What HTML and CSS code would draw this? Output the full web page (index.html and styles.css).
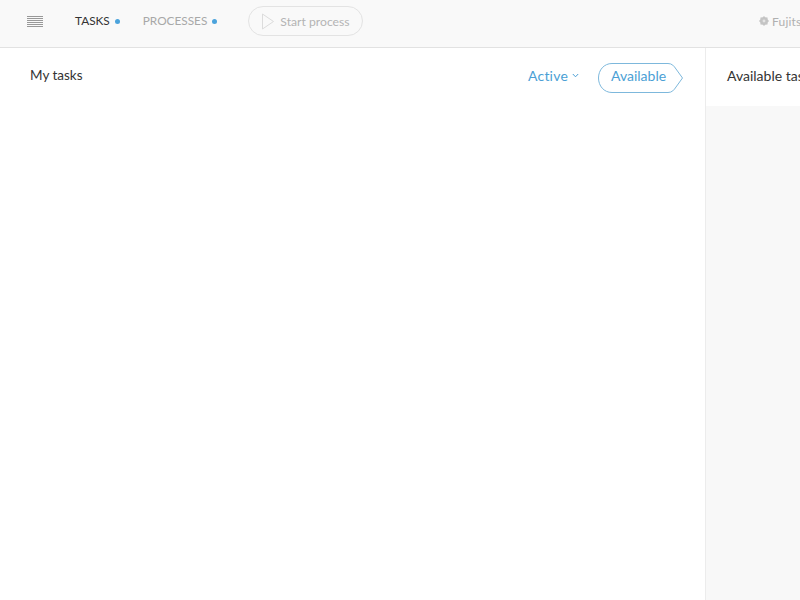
FILE: index.html
```html
<!DOCTYPE html>
<html lang="en">
<head>
    <meta charset="UTF-8">
    <meta name="viewport" content="width=device-width, initial-scale=1.0">
    <title>Tasks</title>
    <link rel="stylesheet" href="styles.css">
</head>
<body>

    <!-- Top bar -->
    <header class="topbar">
        <div class="menu-icon">
            <span></span><span></span><span></span><span></span><span></span><span></span>
        </div>
        <nav class="tabs">
            <div class="tab tab-active">TASKS<i class="dot"></i></div>
            <div class="tab">PROCESSES<i class="dot"></i></div>
        </nav>
        <div class="start-btn">
            <svg class="play-icon" width="14" height="17" viewBox="0 0 14 17">
                <path d="M1.5 1 L12.5 8.5 L1.5 16 Z" fill="none" stroke="#dcdcdc" stroke-width="1"/>
            </svg>
            Start process
        </div>
        <div class="tenant">
            <svg class="gear-icon" width="10" height="10" viewBox="0 0 10 10">
                <path d="M5 0 L6.2 1.3 L8.5 1.5 L8.7 3.6 L10 5 L8.7 6.4 L8.5 8.5 L6.2 8.7 L5 10 L3.8 8.7 L1.5 8.5 L1.3 6.4 L0 5 L1.3 3.6 L1.5 1.5 L3.8 1.3 Z" fill="#c4c4c4"/>
                <circle cx="5" cy="5" r="1.4" fill="#e4e4e4"/>
            </svg>
            Fujitsu
        </div>
    </header>

    <main class="panels">
        <!-- My tasks -->
        <section class="panel-main">
            <div class="panel-head">
                <h2>My tasks</h2>
                <div class="filters">
                    <div class="filter-active">
                        Active
                        <svg width="7" height="5" viewBox="0 0 7 5">
                            <path d="M0.8 1 L3.5 3.8 L6.2 1" fill="none" stroke="#4b9fd5" stroke-width="1"/>
                        </svg>
                    </div>
                    <div class="filter-available">
                        <svg class="tag-shape" width="86" height="30" viewBox="0 0 86 30">
                            <path d="M14 0.5 H70 C74 0.5 76 3 78 6 L84.5 15 L78 24 C76 27 74 29.5 70 29.5 H14 C6 29.5 0.5 23 0.5 15 C0.5 7 6 0.5 14 0.5 Z" fill="#fff" stroke="#7db8dc" stroke-width="1"/>
                        </svg>
                        <span>Available</span>
                    </div>
                </div>
            </div>
        </section>

        <!-- Available tasks -->
        <section class="panel-side">
            <div class="side-head">Available tasks</div>
        </section>
    </main>

</body>
</html>
```

FILE: styles.css
```css
html, body {
    height: 100%;
}

body {
    font-family: Lato, "Open Sans", sans-serif;
    margin: 0;
    padding: 0;
    background-color: #fff;
    color: #333;
    overflow: hidden;
    display: flex;
    flex-direction: column;
}

.topbar {
    flex: none;
    display: flex;
    align-items: center;
    box-sizing: content-box;
    height: 42px;
    padding-bottom: 5px;
    width: 800px;
    background-color: #f9f9f9;
    border-bottom: 1px solid #e2e2e2;
}

.menu-icon {
    display: flex;
    flex-direction: column;
    gap: 1px;
    width: 16px;
    margin-left: 27px;
}

.menu-icon span {
    display: block;
    height: 1px;
    background-color: #999;
}

.tabs {
    display: flex;
    margin-left: 32px;
    gap: 23px;
}

.tab {
    display: flex;
    align-items: center;
    font-size: 11.8px;
    color: #a8a8a8;
    line-height: 16px;
}

.tab-active {
    color: #333;
}

.dot {
    width: 5px;
    height: 5px;
    border-radius: 50%;
    background-color: #4ba3dc;
    margin-left: 5px;
}

.start-btn {
    display: flex;
    align-items: center;
    box-sizing: border-box;
    height: 30px;
    width: 115px;
    margin-left: 31px;
    padding-left: 12px;
    border: 1px solid #e3e3e3;
    border-radius: 15px;
    font-size: 12.2px;
    color: #b4b4b4;
    white-space: nowrap;
}

.play-icon {
    margin-right: 5px;
}

.tenant {
    display: flex;
    align-items: center;
    margin-left: auto;
    width: 41px;
    overflow: hidden;
    font-size: 12px;
    letter-spacing: 0.2px;
    color: #b0b0b0;
    white-space: nowrap;
}

.gear-icon {
    flex: none;
    margin-right: 3px;
}

.panels {
    flex: 1;
    display: flex;
    width: 800px;
}

.panel-main {
    flex: none;
    width: 705px;
    border-right: 1px solid #ececec;
}

.panel-head {
    display: flex;
    justify-content: space-between;
    align-items: flex-start;
    padding: 15px 21px 0 30px;
}

h2 {
    margin: 0;
    font-size: 13.5px;
    font-weight: 400;
    line-height: 25px;
    color: #333;
}

.filters {
    display: flex;
    align-items: center;
    gap: 19px;
    font-size: 14px;
    color: #4b9fd5;
}

.filter-active {
    display: flex;
    align-items: center;
    gap: 4px;
    padding-bottom: 5px;
    letter-spacing: 0.2px;
}

.filter-available {
    position: relative;
    width: 86px;
    height: 30px;
    display: flex;
    align-items: center;
}

.tag-shape {
    position: absolute;
    top: 0;
    left: 0;
}

.filter-available span {
    position: relative;
    margin-left: 13px;
    margin-top: -5px;
}

.panel-side {
    flex: 1;
    background-color: #f8f8f8;
    overflow: hidden;
}

.side-head {
    height: 58px;
    padding-left: 21px;
    background-color: #fff;
    font-size: 14px;
    line-height: 56px;
    color: #333;
    white-space: nowrap;
}
```
